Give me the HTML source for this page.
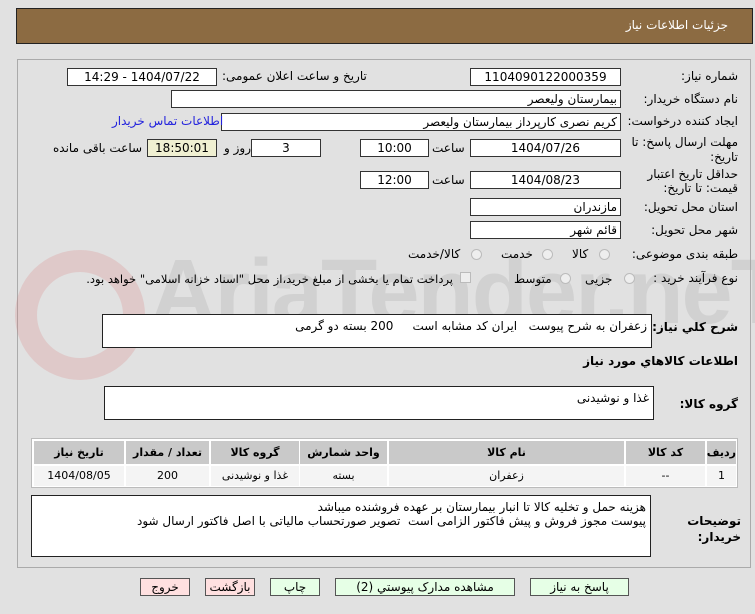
<!DOCTYPE html>
<html><head><meta charset="utf-8"><style>
body{margin:0;width:755px;height:614px;background:#e1e1e1;font-family:"DejaVu Sans",sans-serif;font-size:12px;color:#000;position:relative;overflow:hidden}
.a{position:absolute;white-space:nowrap}
.in{position:absolute;background:#fff;border:1px solid #333;box-sizing:border-box;height:18px;line-height:16px;text-align:center;font-size:12px;direction:rtl}
.l{text-align:right;padding-right:3px}
.lb{position:absolute;white-space:nowrap;font-size:12px;direction:rtl}
.rd{position:absolute;width:11px;height:11px;border:1px solid #bbb;border-radius:50%;background:#eee;box-sizing:border-box}
.btn{position:absolute;top:578px;height:18px;border:1px solid #555;box-sizing:border-box;background:#e6ffe6;text-align:center;line-height:16px;font-size:12px;direction:rtl}
.r{background:#ffe0e0}
.ta{position:absolute;background:#fff;border:1px solid #222;box-sizing:border-box;direction:rtl;text-align:right;padding:4px 4px;font-size:12px;line-height:14px}
.c{position:absolute;text-align:center;font-size:11px;direction:rtl}
.h{background:#c9c9c9;font-weight:bold;top:441px;height:23px;line-height:23px}
.d{background:#f4f4f4;top:466px;height:20px;line-height:20px}
</style></head><body>
<div class="a" style="left:16px;top:8px;width:737px;height:36px;background:#8c6b42;border:1px solid #222;box-sizing:border-box"></div>
<div class="lb" style="right:27px;top:18px;color:#fff">جزئیات اطلاعات نیاز</div>
<div class="a" style="left:17px;top:59px;width:734px;height:509px;border:1px solid #aaa;box-sizing:border-box"></div>

<div class="a" style="left:15px;top:250px;width:130px;height:130px;border-radius:50%;border:22px solid rgba(220,120,120,0.22);box-sizing:border-box"></div>
<div class="a" style="left:150px;top:240px;font-family:'Liberation Sans',sans-serif;font-weight:bold;font-size:92px;color:rgba(170,170,170,0.28);letter-spacing:-2px">AriaTender.neT</div>

<div class="lb" style="right:17px;top:69px">شماره نیاز:</div>
<div class="in" style="left:470px;top:68px;width:151px">1104090122000359</div>
<div class="lb" style="left:222px;top:69px">تاریخ و ساعت اعلان عمومی:</div>
<div class="in" style="left:67px;top:68px;width:150px">1404/07/22 - 14:29</div>
<div class="lb" style="right:17px;top:92px">نام دستگاه خریدار:</div>
<div class="in l" style="left:171px;top:90px;width:450px">بیمارستان ولیعصر</div>
<div class="lb" style="right:17px;top:114px">ایجاد کننده درخواست:</div>
<div class="in l" style="left:221px;top:113px;width:400px">کریم نصری کارپرداز بیمارستان ولیعصر</div>
<div class="lb" style="left:112px;top:114px;color:#2222dd">اطلاعات تماس خریدار</div>
<div class="lb" style="right:17px;top:135px">مهلت ارسال پاسخ: تا</div>
<div class="lb" style="right:17px;top:150px">تاریخ:</div>
<div class="in" style="left:470px;top:139px;width:151px">1404/07/26</div>
<div class="lb" style="left:432px;top:141px">ساعت</div>
<div class="in" style="left:360px;top:139px;width:69px">10:00</div>
<div class="in" style="left:251px;top:139px;width:70px">3</div>
<div class="lb" style="left:224px;top:141px">روز و</div>
<div class="in" style="left:147px;top:139px;width:70px;background:#f0f0d2">18:50:01</div>
<div class="lb" style="left:53px;top:141px">ساعت باقی مانده</div>
<div class="lb" style="right:17px;top:167px">حداقل تاریخ اعتبار</div>
<div class="lb" style="right:17px;top:181px">قیمت: تا تاریخ:</div>
<div class="in" style="left:470px;top:171px;width:151px">1404/08/23</div>
<div class="lb" style="left:432px;top:173px">ساعت</div>
<div class="in" style="left:360px;top:171px;width:69px">12:00</div>
<div class="lb" style="right:17px;top:200px">استان محل تحویل:</div>
<div class="in l" style="left:470px;top:198px;width:151px">مازندران</div>
<div class="lb" style="right:17px;top:223px">شهر محل تحویل:</div>
<div class="in l" style="left:470px;top:221px;width:151px">قائم شهر</div>
<div class="lb" style="right:17px;top:247px">طبقه بندی موضوعی:</div>
<div class="rd" style="left:599px;top:249px"></div><div class="lb" style="left:572px;top:247px">کالا</div>
<div class="rd" style="left:542px;top:249px"></div><div class="lb" style="left:501px;top:247px">خدمت</div>
<div class="rd" style="left:471px;top:249px"></div><div class="lb" style="left:408px;top:247px">کالا/خدمت</div>
<div class="lb" style="right:17px;top:271px">نوع فرآیند خرید :</div>
<div class="rd" style="left:624px;top:273px"></div><div class="lb" style="left:585px;top:272px">جزیی</div>
<div class="rd" style="left:560px;top:273px"></div><div class="lb" style="left:514px;top:272px">متوسط</div>
<div class="a" style="left:460px;top:272px;width:11px;height:11px;border:1px solid #bbb;background:#eee;box-sizing:border-box"></div>
<div class="lb" style="left:67px;top:272px;width:386px;font-size:11.5px;overflow:hidden;text-align:right">پرداخت تمام یا بخشی از مبلغ خرید،از محل "اسناد خزانه اسلامی" خواهد بود.</div>

<div class="lb" style="right:17px;top:320px;font-weight:bold">شرح کلي نياز:</div>
<div class="ta" style="left:102px;top:314px;width:550px;height:34px">زعفران به شرح پیوست &nbsp; ایران کد مشابه است &nbsp; &nbsp; 200 بسته دو گرمی</div>
<div class="lb" style="right:17px;top:354px;font-weight:bold">اطلاعات کالاهاي مورد نياز</div>
<div class="lb" style="right:17px;top:397px;font-weight:bold">گروه کالا:</div>
<div class="ta" style="left:104px;top:386px;width:550px;height:34px">غذا و نوشیدنی</div>

<div class="a" style="left:31px;top:438px;width:707px;height:50px;border:1px solid #bbb;box-sizing:border-box;background:#fff"></div>
<div class="c h" style="left:707px;width:29px">ردیف</div>
<div class="c h" style="left:626px;width:79px">کد کالا</div>
<div class="c h" style="left:389px;width:235px">نام کالا</div>
<div class="c h" style="left:300px;width:87px">واحد شمارش</div>
<div class="c h" style="left:211px;width:88px">گروه کالا</div>
<div class="c h" style="left:126px;width:83px">تعداد / مقدار</div>
<div class="c h" style="left:34px;width:90px">تاریخ نیاز</div>
<div class="c d" style="left:707px;width:29px">1</div>
<div class="c d" style="left:626px;width:79px">--</div>
<div class="c d" style="left:389px;width:235px">زعفران</div>
<div class="c d" style="left:300px;width:87px">بسته</div>
<div class="c d" style="left:211px;width:88px">غذا و نوشیدنی</div>
<div class="c d" style="left:126px;width:83px">200</div>
<div class="c d" style="left:34px;width:90px">1404/08/05</div>

<div class="lb" style="right:14px;top:514px;font-weight:bold">توضیحات</div>
<div class="lb" style="right:14px;top:530px;font-weight:bold">خریدار:</div>
<div class="ta" style="left:31px;top:495px;width:620px;height:62px">هزینه حمل و تخلیه کالا تا انبار بیمارستان بر عهده فروشنده میباشد<br>پیوست مجوز فروش و پیش فاکتور الزامی است &nbsp;تصویر صورتحساب مالیاتی با اصل فاکتور ارسال شود</div>

<div class="btn" style="left:530px;width:99px">پاسخ به نیاز</div>
<div class="btn" style="left:335px;width:180px">مشاهده مدارک پیوستي (2)</div>
<div class="btn" style="left:270px;width:50px">چاپ</div>
<div class="btn r" style="left:205px;width:50px">بازگشت</div>
<div class="btn r" style="left:140px;width:50px">خروج</div>
</body></html>
